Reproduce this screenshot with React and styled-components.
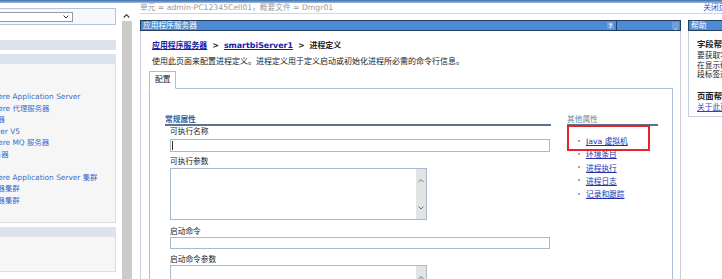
import React from "react";
import styled, { createGlobalStyle } from "styled-components";

// WebSphere console: 进程定义 page, cropped to 722x279

const GlobalStyle = createGlobalStyle`
  html, body { margin: 0; padding: 0; background: #fff; }
  body {
    font-family: "DejaVu Sans", "Noto Sans CJK SC", sans-serif;
    font-size: 7.7px;
    color: #222;
  }
`;

const Page = styled.div`
  width: 722px;
  height: 279px;
  overflow: hidden;
  display: flex;
  flex-direction: column;
`;

const Banner = styled.div`
  flex: none;
  height: 3px;
  background: linear-gradient(#3d6fae, #9bbbe0);
`;

const Body = styled.div`
  flex: 1;
  display: flex;
  min-height: 0;
`;

/* ---------- left navigation (scrolled horizontally) ---------- */

const Nav = styled.nav`
  flex: none;
  width: 116px;
  overflow: hidden;
`;

const NavInner = styled.div`
  width: 176px;
  margin-left: -60px;
  padding-top: 5px;
  font-size: 7.4px;
`;

const FilterBox = styled.div`
  height: 15px;
  border: 1px solid #b3c5dc;
  background: #f5f8fc;
  display: flex;
  align-items: center;
`;

const Select = styled.div`
  width: 110px;
  height: 10px;
  margin-left: 22px;
  border: 1px solid #9a9a9a;
  background: #fff;
  display: flex;
  align-items: center;
  justify-content: flex-end;
  padding-right: 3px;
  box-sizing: border-box;
`;

const SectionBar = styled.div`
  height: 10px;
  margin-top: ${(p) => p.$gap}px;
  background: #dce3ed;
`;

const NavPanel = styled.div`
  background: #f6f6f6;
  border-right: 1px solid #d9dee6;
  border-bottom: 1px solid #d9dee6;
  padding: ${(p) => p.$top}px 0 ${(p) => p.$bottom}px;
`;

const TreeRow = styled.div`
  height: 11.5px;
  line-height: 11.5px;
  white-space: nowrap;
  padding-left: 28px;
  color: #3a6ccc;
`;

/* ---------- vertical scrollbar between nav and page ---------- */

const ScrollColumn = styled.div`
  flex: none;
  width: 21px;
  margin-right: 3px;
  display: flex;
  flex-direction: column;
  align-items: center;
  padding-top: 11px;
  box-sizing: border-box;
`;

const ScrollTrack = styled.div`
  flex: 1;
  width: 10px;
  margin-top: 3px;
  background: #cbcbcb;
`;

/* ---------- main area ---------- */

const Main = styled.div`
  flex: 1;
  min-width: 0;
  display: flex;
  flex-direction: column;
`;

const InfoBar = styled.div`
  flex: none;
  height: 10px;
  line-height: 9px;
  border-bottom: 1px solid #d6d6d6;
  display: flex;
  justify-content: space-between;
  color: #9a9a9a;
  white-space: nowrap;
`;

const CloseLink = styled.span`
  color: #2f3fd0;
  margin-right: -12px;
`;

const PortletRow = styled.div`
  flex: 1;
  display: flex;
  gap: 7px;
  margin-top: 6px;
  min-height: 0;
`;

const Portlet = styled.section`
  flex: none;
  width: ${(p) => p.$width}px;
  display: flex;
  flex-direction: column;
  align-self: ${(p) => (p.$grow ? "stretch" : "flex-start")};
`;

const TitleBar = styled.div`
  height: 9px;
  border: 1px solid #253f62;
  background: #4c8cd6;
  color: #fff;
  line-height: 9px;
  padding-left: 2px;
  display: flex;
  align-items: center;
  white-space: nowrap;
`;

const TitleText = styled.span`
  flex: 1;
`;

const TitleButton = styled.span`
  width: 7px;
  height: 7px;
  margin-right: ${(p) => p.$mr}px;
  background: #6d9fdc;
  color: #fff;
  font-size: 6px;
  font-weight: bold;
  line-height: 7px;
  text-align: center;
`;

const TitleDivider = styled.span`
  width: 1px;
  align-self: stretch;
  background: #253f62;
  margin-right: 55px;
`;

const PortletBody = styled.div`
  flex: 1;
  border-left: 1px solid #c6cfdb;
  border-right: 1px solid #c6cfdb;
  padding: 10px 7px 0 8px;
  display: flex;
  flex-direction: column;
`;

const Crumbs = styled.div`
  margin-left: 3px;
  line-height: 10px;
  font-weight: bold;
  font-size: 7.9px;
  white-space: nowrap;
`;

const CrumbLink = styled.a`
  color: #1a1aa8;
  text-decoration: underline;
`;

const CrumbSep = styled.span`
  margin: 0 5px;
`;

const Desc = styled.p`
  margin: 6px 0 0 3px;
  line-height: 10px;
  font-size: 8px;
  white-space: nowrap;
`;

const Tabs = styled.div`
  display: flex;
  margin-top: 4px;
  position: relative;
  z-index: 1;
`;

const Tab = styled.div`
  height: 16px;
  padding: 0 5px;
  border: 1px solid #aabfd9;
  border-bottom: 1px solid #fff;
  background: #fff;
  line-height: 16px;
  margin-bottom: -1px;
`;

const TabPanel = styled.div`
  flex: 1;
  border: 1px solid #aabfd9;
  border-bottom: none;
  padding: 26px 0 0 15px;
`;

const Columns = styled.div`
  display: flex;
  gap: 16px;
`;

const Column = styled.div`
  width: ${(p) => p.$width}px;
  position: relative;
`;

const SectionTitle = styled.div`
  line-height: 9px;
  border-bottom: 2px solid #58728f;
  color: ${(p) => (p.$muted ? "#6e7f95" : "#2b63a6")};
  font-weight: ${(p) => (p.$muted ? "normal" : "bold")};
`;

const Field = styled.div`
  padding-left: 5px;
  margin-top: ${(p) => p.$gap}px;
`;

const FieldLabel = styled.div`
  line-height: 10px;
  margin-bottom: ${(p) => p.$space}px;
`;

const TextBox = styled.div`
  width: ${(p) => p.$width}px;
  height: ${(p) => p.$height}px;
  border: 1px solid #a9bace;
  box-sizing: border-box;
  background: #fff;
  display: flex;
  align-items: center;
  justify-content: flex-end;
  padding-left: 1px;
`;

const Caret = styled.span`
  width: 1px;
  height: 9px;
  background: #333;
  margin-right: auto;
`;

const AreaScroll = styled.div`
  align-self: stretch;
  width: 10px;
  background: #e3e3e3;
  display: flex;
  flex-direction: column;
  justify-content: space-between;
  align-items: center;
  padding: 10px 0 9px;
`;

const LinkList = styled.ul`
  list-style: none;
  margin: 8px 0 0;
  padding: 0 0 0 11px;
`;

const LinkItem = styled.li`
  display: flex;
  align-items: center;
  gap: 6px;
  height: 13.25px;
  &::before {
    content: "";
    width: 2px;
    height: 2px;
    background: #a4a4a4;
  }
`;

const ItemLink = styled.a`
  color: #2430b0;
  text-decoration: underline;
  white-space: nowrap;
`;

const Highlight = styled.div`
  position: absolute;
  left: 0;
  top: 10px;
  width: 83px;
  height: 26px;
  border: 2px solid #e4262c;
  box-sizing: border-box;
`;

const HelpBody = styled.div`
  border: 1px solid #c6cfdb;
  border-top: none;
  padding: 8px 0 3px 8px;
  white-space: nowrap;
`;

const HelpTitle = styled.div`
  font-weight: bold;
  font-size: 8.4px;
  line-height: 10px;
  margin-top: ${(p) => p.$gap}px;
`;

const HelpText = styled.div`
  line-height: 9.5px;
  margin-top: 2px;
`;

const HelpLink = styled.a`
  display: block;
  line-height: 10px;
  margin-top: 2px;
  color: #2f3fd0;
  text-decoration: underline;
`;

const Chevron = ({ up, color = "#333", w = 7 }) => (
  <svg width={w} height={w * 0.6} viewBox="0 0 10 6">
    <polyline
      points={up ? "1,5 5,1 9,5" : "1,1 5,5 9,1"}
      fill="none"
      stroke={color}
      strokeWidth="1.6"
    />
  </svg>
);

// null = tree heading, scrolled fully out of view
const serverTree = [
  null,
  null,
  "WebSphere Application Server",
  "WebSphere 代理服务器",
  "通用服务器",
  "JMS Server V5",
  "WebSphere MQ 服务器",
  "Web 服务器",
  null,
  "WebSphere Application Server 集群",
  "代理服务器集群",
  "通用服务器集群",
];

const otherProps = ["Java 虚拟机", "环境条目", "进程执行", "进程日志", "记录和跟踪"];

export default function App() {
  return (
    <Page>
      <GlobalStyle />
      <Banner />
      <Body>
        <Nav>
          <NavInner>
            <FilterBox>
              <Select>
                <Chevron w={6} />
              </Select>
            </FilterBox>
            <SectionBar $gap={15} />
            <SectionBar $gap={4} />
            <NavPanel $top={4} $bottom={16}>
              {serverTree.map((s, i) => (
                <TreeRow key={i}>{s}</TreeRow>
              ))}
            </NavPanel>
            <SectionBar $gap={4} />
            <NavPanel $top={2} $bottom={20}>
              <TreeRow>新建应用</TreeRow>
            </NavPanel>
          </NavInner>
        </Nav>

        <ScrollColumn>
          <Chevron up />
          <ScrollTrack />
        </ScrollColumn>

        <Main>
          <InfoBar>
            <span>单元 = admin-PC12345Cell01，概要文件 = Dmgr01</span>
            <CloseLink>关闭页面</CloseLink>
          </InfoBar>
          <PortletRow>
            <Portlet $width={541} $grow>
              <TitleBar>
                <TitleText>应用程序服务器</TitleText>
                <TitleButton $mr={2}>?</TitleButton>
                <TitleDivider />
                <TitleButton $mr={1}>_</TitleButton>
              </TitleBar>
              <PortletBody>
                <Crumbs>
                  <CrumbLink>应用程序服务器</CrumbLink>
                  <CrumbSep>&gt;</CrumbSep>
                  <CrumbLink>smartbiServer1</CrumbLink>
                  <CrumbSep>&gt;</CrumbSep>
                  进程定义
                </Crumbs>
                <Desc>
                  使用此页面来配置进程定义。进程定义用于定义启动或初始化进程所必需的命令行信息。
                </Desc>
                <Tabs>
                  <Tab>配置</Tab>
                </Tabs>
                <TabPanel>
                  <Columns>
                    <Column $width={386}>
                      <SectionTitle>常规属性</SectionTitle>
                      <Field $gap={1}>
                        <FieldLabel $space={2}>可执行名称</FieldLabel>
                        <TextBox $width={380} $height={13}>
                          <Caret />
                        </TextBox>
                      </Field>
                      <Field $gap={5}>
                        <FieldLabel $space={1}>可执行参数</FieldLabel>
                        <TextBox $width={257} $height={52}>
                          <AreaScroll>
                            <Chevron up color="#5d6b80" w={6} />
                            <Chevron color="#5d6b80" w={6} />
                          </AreaScroll>
                        </TextBox>
                      </Field>
                      <Field $gap={7}>
                        <FieldLabel $space={0}>启动命令</FieldLabel>
                        <TextBox $width={380} $height={12} />
                      </Field>
                      <Field $gap={6}>
                        <FieldLabel $space={0}>启动命令参数</FieldLabel>
                        <TextBox $width={257} $height={52}>
                          <AreaScroll>
                            <Chevron up color="#5d6b80" w={6} />
                            <Chevron color="#5d6b80" w={6} />
                          </AreaScroll>
                        </TextBox>
                      </Field>
                    </Column>
                    <Column $width={91}>
                      <SectionTitle $muted>其他属性</SectionTitle>
                      <LinkList>
                        {otherProps.map((p) => (
                          <LinkItem key={p}>
                            <ItemLink>{p}</ItemLink>
                          </LinkItem>
                        ))}
                      </LinkList>
                      <Highlight />
                    </Column>
                  </Columns>
                </TabPanel>
              </PortletBody>
            </Portlet>

            <Portlet $width={200}>
              <TitleBar>
                <TitleText>帮助</TitleText>
              </TitleBar>
              <HelpBody>
                <HelpTitle $gap={0}>字段帮助</HelpTitle>
                <HelpText>
                  要获取字段帮助信息，请选择页面上的任何字
                  <br />
                  在显示帮助信息的字段标签或列表标记上，
                  <br />
                  段标签或列表标记。
                </HelpText>
                <HelpTitle $gap={11}>页面帮助</HelpTitle>
                <HelpLink>关于此页面的更多信息</HelpLink>
              </HelpBody>
            </Portlet>
          </PortletRow>
        </Main>
      </Body>
    </Page>
  );
}
